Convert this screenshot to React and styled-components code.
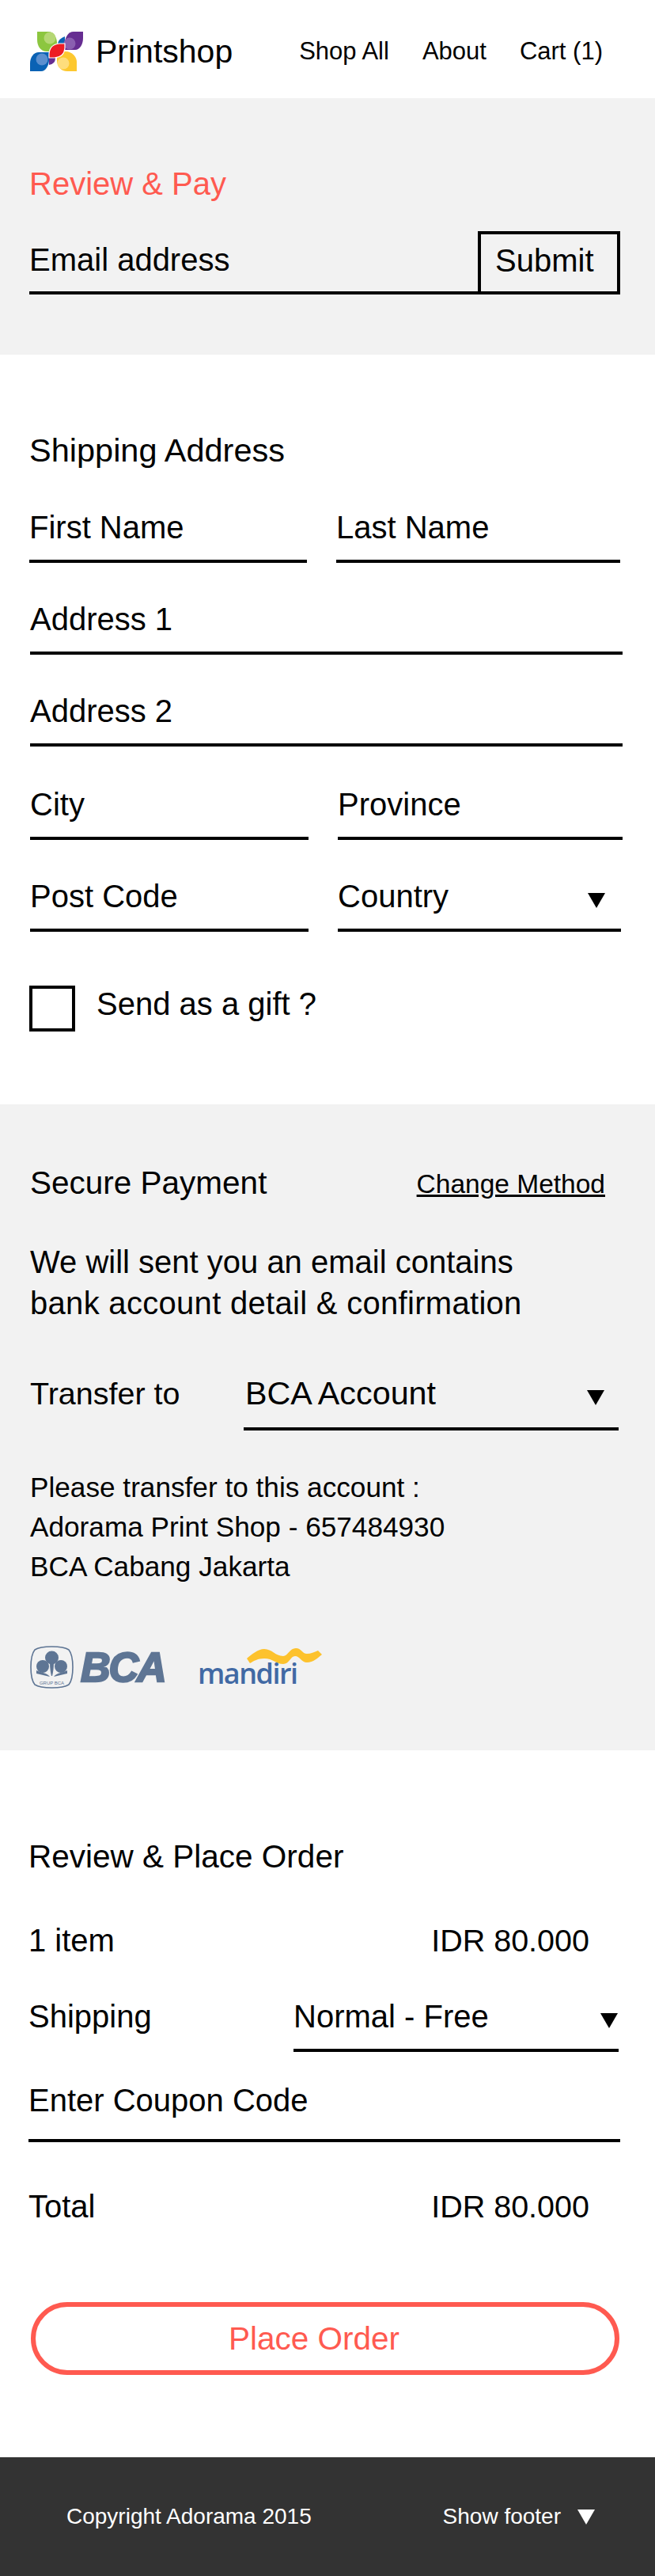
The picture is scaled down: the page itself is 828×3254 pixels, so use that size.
import React from "react";
import styled, { createGlobalStyle } from "styled-components";

const CORAL = "#ff5a50";

const GlobalStyle = createGlobalStyle`
  * { box-sizing: border-box; }
  html, body { margin: 0; padding: 0; background: #fff; }
  body { font-family: "Liberation Sans", Arial, sans-serif; color: #000; }
`;

const Page = styled.div`
  width: 828px;
  height: 3254px;
  overflow: hidden;
  display: flex;
  flex-direction: column;
`;

const Header = styled.header`
  flex: none;
  height: 124px;
  padding: 6px 66px 0 37px;
  display: flex;
  align-items: center;
  justify-content: space-between;
`;

const Brand = styled.div`
  display: flex;
  align-items: center;
  gap: 16px;
  font-size: 41px;
`;

const Nav = styled.nav`
  display: flex;
  gap: 42px;
  font-size: 31px;
`;

const Band = styled.section`
  flex: none;
  height: ${(p) => p.$height}px;
  padding: ${(p) => p.$top}px ${(p) => p.$right ?? 44}px 0 ${(p) => p.$left ?? 37}px;
  background: ${(p) => (p.$grey ? "#f2f2f2" : "#fff")};
`;

const Heading = styled.h2`
  margin: 0;
  font-weight: 400;
  font-size: ${(p) => p.$size ?? 40}px;
  line-height: 46px;
  color: ${(p) => (p.$accent ? CORAL : "#000")};
`;

const EmailRow = styled.div`
  margin-top: 37px;
  height: 80px;
  display: flex;
  align-items: stretch;
  justify-content: space-between;
  border-bottom: 4px solid #000;
  font-size: 40px;
`;

const EmailLabel = styled.span`
  align-self: center;
  margin-bottom: 3px;
`;

const SubmitButton = styled.div`
  width: 180px;
  border: 4px solid #000;
  border-bottom: 0;
  padding: 0 0 5px 18px;
  display: flex;
  align-items: center;
`;

const FieldGrid = styled.div`
  display: grid;
  grid-template-columns: ${(p) => p.$columns || "1fr"};
  column-gap: ${(p) => p.$gap ?? 37}px;
  margin-top: ${(p) => p.$mt ?? 48}px;
  margin-right: ${(p) => p.$mr ?? 0}px;
  margin-left: ${(p) => p.$ml ?? 0}px;
`;

const Field = styled.div`
  height: 68px;
  display: flex;
  align-items: flex-start;
  justify-content: space-between;
  border-bottom: 4px solid #000;
  font-size: 40px;
  line-height: 46px;
`;

const Arrow = styled.span`
  width: 0;
  height: 0;
  flex: none;
  align-self: ${(p) => p.$align || "flex-start"};
  margin-top: ${(p) => p.$mt ?? 19}px;
  margin-right: ${(p) => p.$mr ?? 20}px;
  border-left: ${(p) => p.$size ?? 11}px solid transparent;
  border-right: ${(p) => p.$size ?? 11}px solid transparent;
  border-top: ${(p) => (p.$size ?? 11) * 1.75}px solid ${(p) => p.$color || "#000"};
`;

const GiftRow = styled.div`
  margin-top: 68px;
  display: flex;
  gap: 27px;
  font-size: 40px;
  line-height: 46px;
`;

const Checkbox = styled.span`
  width: 58px;
  height: 58px;
  flex: none;
  border: 4px solid #000;
`;

const TitleRow = styled.div`
  display: flex;
  align-items: center;
  justify-content: space-between;
`;

const ChangeLink = styled.a`
  font-size: 33.5px;
  color: #000;
  text-decoration: underline;
  margin: 3px 17px 0 0;
`;

const Note = styled.p`
  margin: 51px 0 0;
  font-size: 40px;
  line-height: 52px;
`;

const NoteLine = styled.span`
  display: block;
  letter-spacing: ${(p) => p.$spread ?? 0}px;
`;

const TransferRow = styled.div`
  margin-top: 65px;
  display: flex;
  justify-content: space-between;
  font-size: 39.5px;
  line-height: 46px;
`;

const TransferSelect = styled(Field)`
  width: 474px;
  padding-left: 2px;
  height: 70px;
  font-size: 41.3px;
`;

const AccountInfo = styled.p`
  margin: 47px 0 0;
  font-size: 35.2px;
  line-height: 50px;
  white-space: pre-line;
`;

const LogoRow = styled.div`
  margin-top: 75px;
  display: flex;
  align-items: flex-start;
`;

const BcaBlock = styled.div`
  display: flex;
  align-items: center;
  gap: 9px;
  color: #5e7594;
`;

const BcaWord = styled.span`
  font-weight: 700;
  font-style: italic;
  font-size: 52px;
  line-height: 53px;
  letter-spacing: -2px;
  -webkit-text-stroke: 2.5px #5e7594;
  width: 104px;
`;

const MandiriBlock = styled.div`
  position: relative;
  margin-left: 44px;
  margin-top: 3px;
  width: 157px;
  height: 49px;
`;

const MandiriWord = styled.span`
  position: absolute;
  left: 0;
  bottom: 0;
  font-family: "Open Sans", sans-serif;
  font-weight: 600;
  font-size: 36px;
  line-height: 35px;
  letter-spacing: -1.5px;
  color: #4169a4;
`;

const Swoosh = styled.svg`
  position: absolute;
  left: 62px;
  top: 0;
`;

const SummaryRow = styled.div`
  display: flex;
  justify-content: space-between;
  align-items: flex-start;
  margin-top: ${(p) => p.$mt}px;
  padding-right: ${(p) => p.$pr ?? 0}px;
  font-size: 40px;
  line-height: 46px;
`;

const Amount = styled.span`
  font-size: 39.5px;
`;

const ShippingSelect = styled(Field)`
  width: 411px;
  height: 68px;
`;

const CouponField = styled(Field)`
  margin-top: 38px;
  height: 76px;
`;

const PlaceOrder = styled.button`
  display: block;
  width: 744px;
  height: 92px;
  margin: 98px 0 0 3px;
  padding: 0 28px 0 0;
  border: 6px solid ${CORAL};
  border-radius: 46px;
  background: #fff;
  color: ${CORAL};
  font-family: inherit;
  font-size: 40.5px;
`;

const Footer = styled.footer`
  flex: none;
  height: 150px;
  background: #333;
  color: #fff;
  padding: 0 76px 0 84px;
  display: flex;
  align-items: center;
  justify-content: space-between;
  font-size: 28px;
`;

const FooterToggle = styled.div`
  display: flex;
  align-items: center;
  gap: 21px;
`;

const PrintshopLogo = () => (
  <svg width="68" height="50" viewBox="0 0 68 50">
    <path d="M36 15Q37 9 45 6V15Z" fill="#0a62b4" />
    <path d="M25 33V42Q33 41 33 33Z" fill="#662d91" />
    <path d="M10 0H24C31 0 35 8 35 14V25H22C14 25 10 18 10 10Z" fill="#8cc63f" />
    <circle cx="26" cy="8" r="7.5" fill="#b5d774" />
    <path d="M68 0H56C49 0 45 8 45 14V23H58C64 23 68 16 68 8Z" fill="#662d91" />
    <circle cx="51" cy="15" r="7.5" fill="#8a5fb0" />
    <path d="M1 50H15C21 50 25 42 25 36V26H12C6 26 1 32 1 40Z" fill="#0a62b4" />
    <circle cx="16" cy="35" r="7.5" fill="#5b8fcf" />
    <path d="M60 50V38C60 32 54 25 46 25H35V36C35 44 40 50 48 50Z" fill="#fdc82f" />
    <circle cx="43" cy="40" r="7.5" fill="#fedd7c" />
    <path d="M25 33V28Q26 16 38 15H45V21Q44 32 32 33Z" fill="#ed1c24" stroke="#fff" strokeWidth="1.2" />
  </svg>
);

const BcaEmblem = () => (
  <svg width="55" height="54" viewBox="0 0 55 54">
    <path d="M27.5 1C38 1 46 3 49 5C53 10 54 18 54 27C54 36 53 44 49 49C46 51 38 53 27.5 53C17 53 9 51 6 49C2 44 1 36 1 27C1 18 2 10 6 5C9 3 17 1 27.5 1Z" fill="none" stroke="#5e7594" strokeWidth="1.6" />
    <circle cx="27.5" cy="15" r="8.5" fill="#5e7594" />
    <path d="M25 21C25 28 26 34 27 38H28C29 34 30 28 30 21Z" fill="#5e7594" />
    <circle cx="16" cy="26" r="8" fill="#5e7594" />
    <circle cx="39" cy="26" r="8" fill="#5e7594" />
    <path d="M8 31C14 34 21 34 25 39L8 35Z" fill="#5e7594" />
    <path d="M47 31C41 34 34 34 30 39L47 35Z" fill="#5e7594" />
    <text x="27.5" y="49" textAnchor="middle" fontFamily="Liberation Sans, sans-serif" fontSize="6" fill="#5e7594">GRUP BCA</text>
  </svg>
);

const App = () => (
  <Page>
    <GlobalStyle />
    <Header>
      <Brand>
        <PrintshopLogo />
        <span>Printshop</span>
      </Brand>
      <Nav>
        <span>Shop All</span>
        <span>About</span>
        <span>Cart (1)</span>
      </Nav>
    </Header>

    <Band $grey $height={324} $top={85}>
      <Heading $accent>Review &amp; Pay</Heading>
      <EmailRow>
        <EmailLabel>Email address</EmailLabel>
        <SubmitButton>Submit</SubmitButton>
      </EmailRow>
    </Band>

    <Band $height={947} $top={98} $right={38} $left={37}>
      <Heading $size={41.5}>Shipping Address</Heading>
      <FieldGrid $columns="351px 359px" $mt={51} $mr={3}>
        <Field>First Name</Field>
        <Field>Last Name</Field>
      </FieldGrid>
      <FieldGrid $ml={1} $mr={3}>
        <Field>Address 1</Field>
      </FieldGrid>
      <FieldGrid $ml={1} $mr={3}>
        <Field>Address 2</Field>
      </FieldGrid>
      <FieldGrid $columns="352px 360px" $mt={50} $ml={1}>
        <Field>City</Field>
        <Field>Province</Field>
      </FieldGrid>
      <FieldGrid $columns="352px 358px" $ml={1}>
        <Field>Post Code</Field>
        <Field>
          Country
          <Arrow />
        </Field>
      </FieldGrid>
      <GiftRow>
        <Checkbox />
        <span>Send as a gift ?</span>
      </GiftRow>
    </Band>

    <Band $grey $height={816} $top={76} $right={46} $left={38}>
      <TitleRow>
        <Heading $size={40.5}>Secure Payment</Heading>
        <ChangeLink>Change Method</ChangeLink>
      </TitleRow>
      <Note>
        <NoteLine>We will sent you an email contains</NoteLine>
        <NoteLine $spread={0.3}>bank account detail &amp; confirmation</NoteLine>
      </Note>
      <TransferRow>
        <span>Transfer to</span>
        <TransferSelect>
          BCA Account
          <Arrow $mr={18} />
        </TransferSelect>
      </TransferRow>
      <AccountInfo>
        {"Please transfer to this account :\nAdorama Print Shop - 657484930\nBCA Cabang Jakarta"}
      </AccountInfo>
      <LogoRow>
        <BcaBlock>
          <BcaEmblem />
          <BcaWord>BCA</BcaWord>
        </BcaBlock>
        <MandiriBlock>
          <Swoosh width="96" height="20" viewBox="0 0 96 20">
            <path d="M0 13C6 8 14 1 22 1C32 1 36 10 46 10C52 10 54 0 62 0C69 0 70 7 76 7C81 7 85 5 90 3L95 8C90 12 84 18 76 18C69 18 67 10 61 10C55 10 54 20 46 20C37 20 33 13 22 13C14 13 9 16 4 19Z" fill="#fdc22d" />
          </Swoosh>
          <MandiriWord>mandiri</MandiriWord>
        </MandiriBlock>
      </LogoRow>
    </Band>

    <Band $height={893} $top={111} $right={44} $left={36}>
      <Heading $size={40.5}>Review &amp; Place Order</Heading>
      <SummaryRow $mt={60} $pr={39}>
        <span>1 item</span>
        <Amount>IDR 80.000</Amount>
      </SummaryRow>
      <SummaryRow $mt={50} $pr={2}>
        <span>Shipping</span>
        <ShippingSelect>
          Normal - Free
          <Arrow $mr={1} />
        </ShippingSelect>
      </SummaryRow>
      <CouponField>Enter Coupon Code</CouponField>
      <SummaryRow $mt={58} $pr={39}>
        <span>Total</span>
        <Amount>IDR 80.000</Amount>
      </SummaryRow>
      <PlaceOrder>Place Order</PlaceOrder>
    </Band>

    <Footer>
      <span>Copyright Adorama 2015</span>
      <FooterToggle>
        <span>Show footer</span>
        <Arrow $align="center" $mt={0} $mr={0} $size={11} $color="#fff" />
      </FooterToggle>
    </Footer>
  </Page>
);

export default App;
